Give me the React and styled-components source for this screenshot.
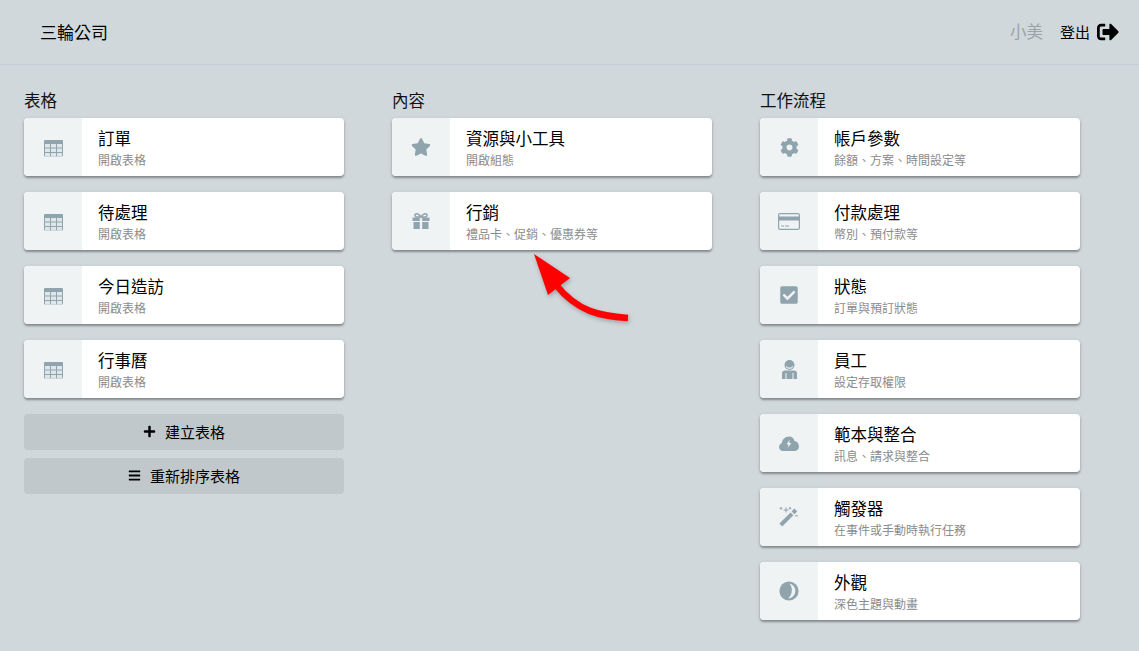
import React from "react";
import styled, { createGlobalStyle } from "styled-components";
import { FaStar, FaCog, FaCheckSquare, FaPlus, FaBars, FaSignOutAlt } from "react-icons/fa";

const ICON = "#90a4ae";
const PANEL = "#eff3f4";

const Global = createGlobalStyle`
  html, body { margin: 0; padding: 0; }
  body {
    background: #d0d8dc;
    color: #000;
    font-family: "Roboto", "Noto Sans CJK TC", sans-serif;
    height: 651px;
    overflow: hidden;
  }
`;

const Page = styled.div`
  position: relative;
  width: 1139px;
  height: 651px;
`;
const Header = styled.header`
  height: 64px;
  box-sizing: content-box;
  border-bottom: 1px solid #c6d0d4;
  display: flex;
  align-items: center;
  padding: 0 20px 0 40px;
`;
const Brand = styled.div`
  font-size: 17px;
  flex: 1;
  margin-top: -2px;
`;
const UserName = styled.span`
  font-size: 16.5px;
  color: #9aa3a7;
  margin-right: 17px;
  margin-top: -2px;
`;
const Logout = styled.div`
  display: flex;
  align-items: center;
  gap: 7px;
  font-size: 15px;
  margin-top: -1px;
`;
const Columns = styled.main`
  display: flex;
  gap: 48px;
  padding: 27px 24px 0;
`;
const Column = styled.section`
  width: 320px;
  display: flex;
  flex-direction: column;
`;
const Title = styled.h2`
  margin: 0;
  font-size: 16.5px;
  font-weight: 400;
  line-height: 20px;
  height: 18px;
  color: #111;
`;
const Cards = styled.div`
  display: flex;
  flex-direction: column;
  gap: 16px;
  margin-top: 8px;
`;
const Card = styled.div`
  height: 58px;
  display: flex;
  background: #fff;
  border-radius: 4px;
  overflow: hidden;
  box-shadow: 0 2px 2px rgba(0, 0, 0, 0.3), 0 1px 4px rgba(0, 0, 0, 0.12);
`;
const IconBox = styled.div`
  width: 58px;
  flex: none;
  background: ${PANEL};
  display: flex;
  align-items: center;
  justify-content: center;
  color: ${ICON};
  font-size: 19px;
`;
const Body = styled.div`
  padding: 11px 0 0 16px;
  display: flex;
  flex-direction: column;
`;
const Name = styled.div`
  font-size: 16.5px;
  line-height: 22px;
`;
const Desc = styled.div`
  font-size: 12px;
  line-height: 18px;
  margin-top: 1px;
  color: #8b8b8b;
`;
const Actions = styled.div`
  display: flex;
  flex-direction: column;
  gap: 8px;
  margin-top: 16px;
`;
const Action = styled.div`
  height: 36px;
  padding-bottom: 2px;
  box-sizing: border-box;
  border-radius: 4px;
  background: #c0c8cb;
  display: flex;
  align-items: center;
  justify-content: center;
  gap: 9px;
  font-size: 15px;
`;
const Arrow = styled.svg`
  position: absolute;
  left: 520px;
  top: 245px;
  filter: drop-shadow(1px 2px 2px rgba(0, 0, 0, 0.25));
`;

const TableIcon = () => (
  <svg width="19" height="20" viewBox="0 -3 19 20">
    <rect width="19" height="16.5" rx="1" fill={ICON} />
    {[1, 7, 13].map((x) =>
      [4, 8.5, 13].map((y) => (
        <rect key={`${x}-${y}`} x={x} y={y} width="5" height="3.5" fill="#dfe6e9" />
      ))
    )}
  </svg>
);
const GiftIcon = () => (
  <svg width="18" height="16" viewBox="0 0 18 16">
    <path d="M8.6 4 H5 C2.5 4 2.2 0.8 4.6 0.8 C6.5 0.8 8 2.4 9 4 C10 2.4 11.5 0.8 13.4 0.8 C15.8 0.8 15.5 4 13 4 H9.4" fill="none" stroke={ICON} strokeWidth="1.5" />
    <path d="M0.5 4.5 H7.8 V8 H0.5 Z M10.2 4.5 H17.5 V8 H10.2 Z M1.5 9 H7.8 V16 H1.5 Z M10.2 9 H16.5 V16 H10.2 Z" fill={ICON} />
  </svg>
);
const CardIcon = () => (
  <svg width="22" height="17" viewBox="0 0 22 17">
    <rect x="0.6" y="0.6" width="20.8" height="15.8" rx="1.5" fill="none" stroke={ICON} strokeWidth="1.2" />
    <rect x="1" y="3.5" width="20" height="4" fill={ICON} />
    <path d="M3 13 H6 M7 13 H11" stroke={ICON} strokeWidth="1" />
  </svg>
);
const PersonIcon = () => (
  <svg width="15" height="19" viewBox="0 0 15 19">
    <circle cx="7.5" cy="5" r="5" fill={ICON} />
    <path d="M4 5.5 C5 8 10 8 11 5.5 V7 C10 9.5 5 9.5 4 7 Z" fill="#dfe6e9" />
    <path d="M0 19 V13 C0 11 2 10.5 4 10.5 H11 C13 10.5 15 11 15 13 V19 H11.5 V13 H10.5 V19 H4.5 V13 H3.5 V19 Z" fill={ICON} />
  </svg>
);
const CloudIcon = () => (
  <svg width="20" height="15" viewBox="0 0 20 15">
    <path d="M4.5 15 C1.5 15 0 13 0 11 C0 9 1.5 7.5 3 7 C3 3.5 6 0.5 10 0.5 C13 0.5 15 2.5 15.5 5 C18 5.3 20 7.5 20 10.5 C20 13 18 15 15.5 15 Z" fill={ICON} />
    <path d="M10.8 3.5 L7.5 8.6 H9.6 L8.6 12 L12.4 7 H10.2 Z" fill={PANEL} />
  </svg>
);
const WandIcon = () => (
  <svg width="20" height="20" viewBox="0 0 20 20">
    <path d="M1.8 18 L13 6.8" stroke={ICON} strokeWidth="4" />
    <path d="M14 5.8 L16.8 3" stroke={ICON} strokeWidth="4" />
    <path d="M7 0.5 V5.5 M4.5 3 H9.5 M2 0 V2.6 M0.7 1.3 H3.3 M11 0 V2.4 M9.8 1.2 H12.2 M16 8.8 H19" stroke={ICON} strokeWidth="1" />
  </svg>
);
const AdjustIcon = () => (
  <svg width="20" height="20" viewBox="0 0 20 20">
    <circle cx="10" cy="10" r="9.6" fill={ICON} />
    <path d="M10.5 2.5 A7.6 7.6 0 0 1 9 17.5 C13.5 14 14 6.5 10.5 2.5 Z" fill={PANEL} />
  </svg>
);

const Star = () => <FaStar size={20} />;
const Cog = () => <FaCog size={19} />;
const Check = () => <FaCheckSquare size={20} />;

const columns = [
  {
    title: "表格",
    items: [
      [TableIcon, "訂單", "開啟表格"],
      [TableIcon, "待處理", "開啟表格"],
      [TableIcon, "今日造訪", "開啟表格"],
      [TableIcon, "行事曆", "開啟表格"],
    ],
    actions: [
      [FaPlus, "建立表格"],
      [FaBars, "重新排序表格"],
    ],
  },
  {
    title: "內容",
    items: [
      [Star, "資源與小工具", "開啟組態"],
      [GiftIcon, "行銷", "禮品卡、促銷、優惠券等"],
    ],
  },
  {
    title: "工作流程",
    items: [
      [Cog, "帳戶參數", "餘額、方案、時間設定等"],
      [CardIcon, "付款處理", "幣別、預付款等"],
      [Check, "狀態", "訂單與預訂狀態"],
      [PersonIcon, "員工", "設定存取權限"],
      [CloudIcon, "範本與整合", "訊息、請求與整合"],
      [WandIcon, "觸發器", "在事件或手動時執行任務"],
      [AdjustIcon, "外觀", "深色主題與動畫"],
    ],
  },
];

export default function App() {
  return (
    <Page>
      <Global />
      <Header>
        <Brand>三輪公司</Brand>
        <UserName>小美</UserName>
        <Logout>
          登出
          <FaSignOutAlt size={22} />
        </Logout>
      </Header>
      <Columns>
        {columns.map((col) => (
          <Column key={col.title}>
            <Title>{col.title}</Title>
            <Cards>
              {col.items.map(([Icon, name, desc]) => (
                <Card key={name}>
                  <IconBox>
                    <Icon />
                  </IconBox>
                  <Body>
                    <Name>{name}</Name>
                    <Desc>{desc}</Desc>
                  </Body>
                </Card>
              ))}
            </Cards>
            {col.actions && (
              <Actions>
                {col.actions.map(([Icon, label]) => (
                  <Action key={label}>
                    <Icon size={13} />
                    {label}
                  </Action>
                ))}
              </Actions>
            )}
          </Column>
        ))}
      </Columns>
      <Arrow width="120" height="85" viewBox="520 245 120 85">
        <path d="M628 318 C600 316 578 312 556 285" fill="none" stroke="#f00" strokeWidth="6.5" />
        <path d="M534 254 L570 278 L548 295 Z" fill="#f00" />
      </Arrow>
    </Page>
  );
}
